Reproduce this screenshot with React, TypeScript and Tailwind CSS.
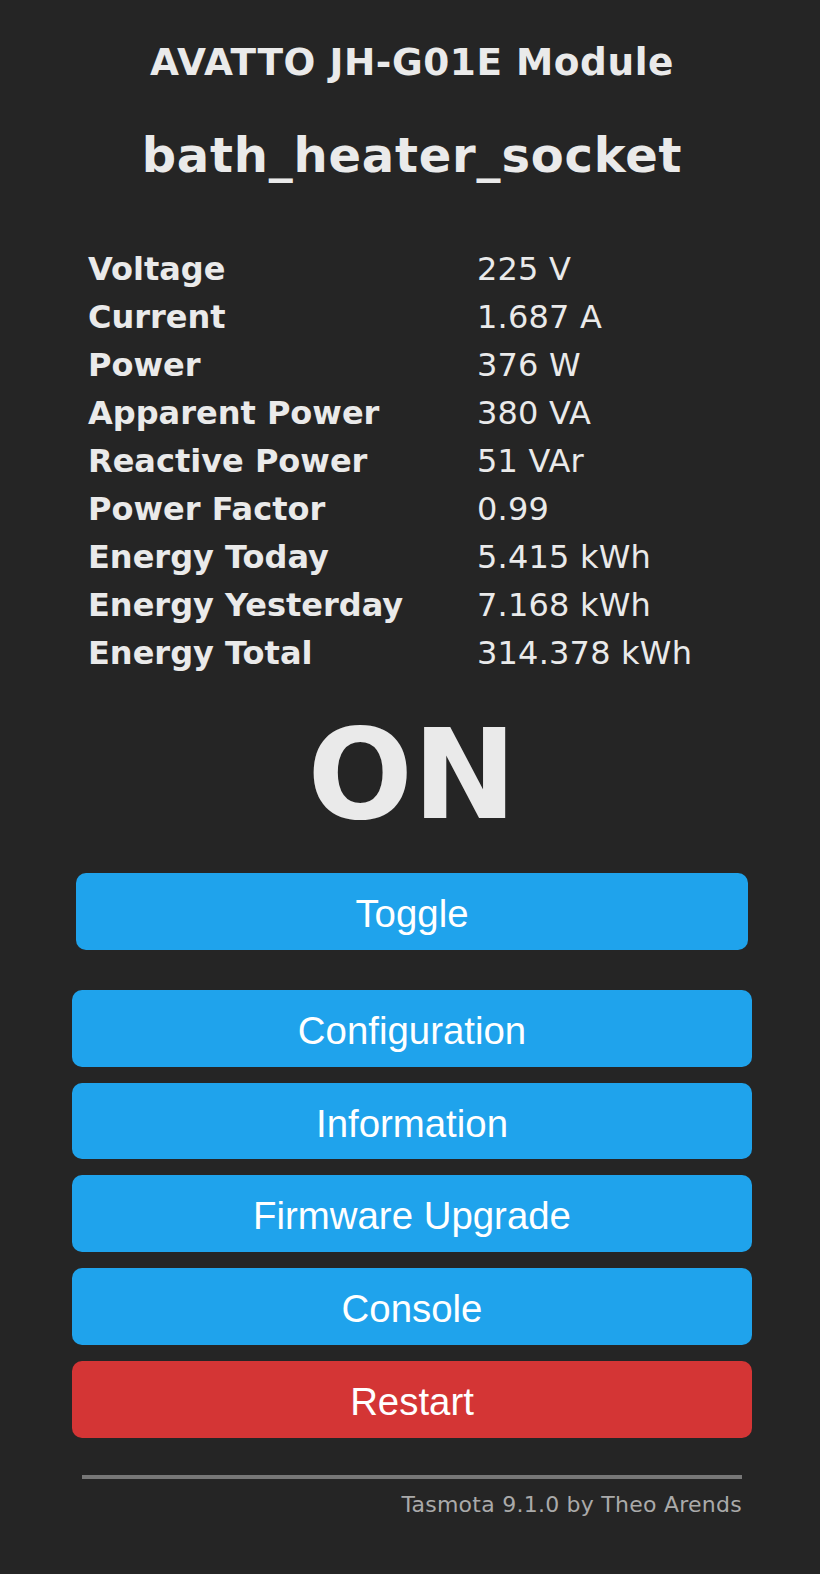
const readings = [
  { label: "Voltage", value: "225 V" },
  { label: "Current", value: "1.687 A" },
  { label: "Power", value: "376 W" },
  { label: "Apparent Power", value: "380 VA" },
  { label: "Reactive Power", value: "51 VAr" },
  { label: "Power Factor", value: "0.99" },
  { label: "Energy Today", value: "5.415 kWh" },
  { label: "Energy Yesterday", value: "7.168 kWh" },
  { label: "Energy Total", value: "314.378 kWh" },
]

const menu = [
  { name: "Configuration", danger: false },
  { name: "Information", danger: false },
  { name: "Firmware Upgrade", danger: false },
  { name: "Console", danger: false },
  { name: "Restart", danger: true },
]

function MenuButton({ name, danger }: { name: string; danger?: boolean }) {
  return (
    <button
      className={
        danger
          ? "w-full h-[76.8px] pt-[3px] rounded-[10px] bg-[#d43535] text-white text-[38.4px] leading-[76.8px] font-['Liberation_Sans',Arial,sans-serif]"
          : "w-full h-[76.8px] pt-[3px] rounded-[10px] bg-[#1fa3ec] text-white text-[38.4px] leading-[76.8px] font-['Liberation_Sans',Arial,sans-serif]"
      }
    >
      {name}
    </button>
  )
}

export default function App() {
  return (
    <div className="min-h-screen bg-[#252525] text-[#eaeaea] font-['DejaVu_Sans',Verdana,sans-serif]">
      <div className="ml-[72px] w-[680px] pt-[40px] pb-[40px]">
        {/* Header */}
        <h3 className="text-center font-bold text-[37.44px] leading-[44px] tracking-[0.55px]">AVATTO JH-G01E Module</h3>
        <h2 className="mt-[43px] text-center font-bold text-[48px] leading-[56px] tracking-[0.8px]">bath_heater_socket</h2>

        {/* Sensor table */}
        <div className="mt-[62px] pl-[16px]">
          {readings.map((r) => (
            <div key={r.label} className="grid grid-cols-[389px_1fr] h-[48px] text-[32px] leading-[48px]">
              <span className="font-bold whitespace-nowrap">{r.label}</span>
              <span className="whitespace-nowrap tracking-[0.2px]">{r.value}</span>
            </div>
          ))}
        </div>

        {/* Power state */}
        <div className="mt-[26px] text-center font-bold text-[124px] leading-[144px]">ON</div>

        <div className="mt-[26px] px-[4px]">
          <MenuButton name="Toggle" />
        </div>

        <div className="mt-[40px] flex flex-col gap-[16px]">
          {menu.map((m) => (
            <MenuButton key={m.name} name={m.name} danger={m.danger} />
          ))}
        </div>

        {/* Footer */}
        <div className="mt-[37px] mx-[10px] h-[4px] bg-[#777]" />
        <div className="mt-[13px] pr-[10px] text-right text-[22px] leading-[26px] tracking-[0.25px] text-[#aaa]">
          Tasmota 9.1.0 by Theo Arends
        </div>
      </div>
    </div>
  )
}
